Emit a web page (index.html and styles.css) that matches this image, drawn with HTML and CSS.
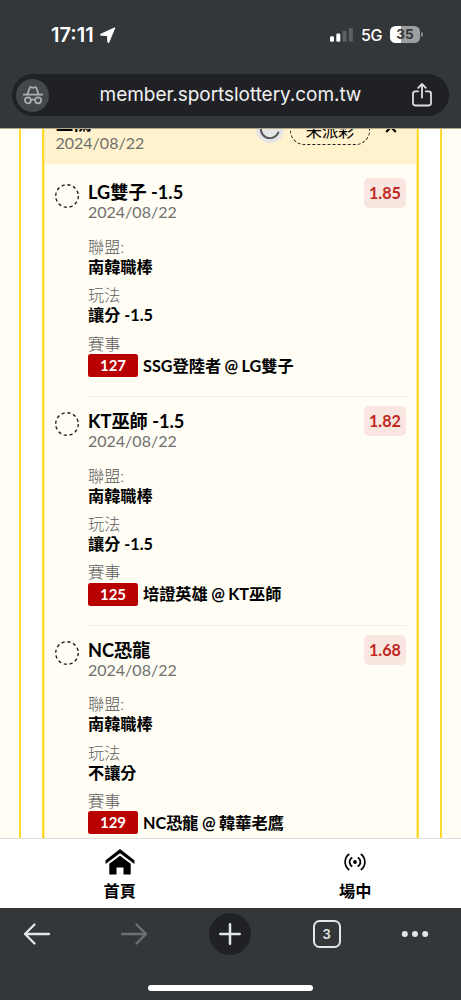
FILE: index.html
```html
<!DOCTYPE html>
<html lang="zh-Hant">
<head>
    <meta charset="UTF-8">
    <meta name="viewport" content="width=device-width, initial-scale=1.0">
    <title>member.sportslottery.com.tw</title>
    <link rel="stylesheet" href="styles.css">
</head>
<body>

<header class="browser-top">
    <div class="status-bar">
        <span class="time">17:11</span>
        <svg class="location" width="16" height="16" viewBox="0 0 16 16"><path d="M14.6 1 1 7.3q-.7.5.2.8l6.4.4.4 6.4q.3.8.8.2z" fill="#fff" stroke="#fff" stroke-width="1.2" stroke-linejoin="round"/></svg>
        <svg class="signal" width="23" height="14" viewBox="0 0 23 14">
            <rect x="0" y="8.3" width="4" height="5.5" rx="1.2" fill="#fff"/>
            <rect x="6.3" y="5.5" width="4" height="8.3" rx="1.2" fill="#fff"/>
            <rect x="12.6" y="2.8" width="4" height="11" rx="1.2" fill="#5d6062"/>
            <rect x="18.9" y="0" width="4" height="13.8" rx="1.2" fill="#5d6062"/>
        </svg>
        <span class="network">5G</span>
        <span class="battery">35</span>
        <span class="battery-tip"></span>
    </div>
    <div class="address-bar">
        <span class="incognito">
            <svg width="20" height="19" viewBox="0 0 20 19" fill="none" stroke="#a9adb1" stroke-width="1.8">
                <path d="M0 8.6h20"/>
                <path d="M4.6 8 6.6 2q.3-1 1.3-.8l2.1.6 2.1-.6q1-.2 1.3.8l2 6"/>
                <circle cx="4.9" cy="14.3" r="3"/>
                <circle cx="15.1" cy="14.3" r="3"/>
                <path d="M7.8 14q2.2-1.3 4.4 0"/>
            </svg>
        </span>
        <span class="url">member.sportslottery.com.tw</span>
        <svg class="share" width="20" height="24" viewBox="0 0 20 24" fill="none" stroke="#dcdee1" stroke-width="1.8" stroke-linecap="round" stroke-linejoin="round">
            <path d="M6.2 8.3H3.4Q1 8.3 1 10.7v9.4q0 2.4 2.4 2.4h13.2q2.4 0 2.4-2.4v-9.4q0-2.4-2.4-2.4h-2.8"/>
            <path d="M10 14.6V1.2M6.2 4.8 10 1l3.8 3.8"/>
        </svg>
    </div>
</header>

<main class="page">
    <div class="side side-left"></div>
    <div class="card">
        <div class="card-header">
            <div class="card-info">
                <div class="title">三關</div>
                <div class="date">2024/08/22</div>
            </div>
            <span class="refresh">
                <svg width="20" height="20" viewBox="0 0 20 20" fill="none" stroke="#555" stroke-width="2" stroke-linecap="round"><path d="M16 3.5A9 9 0 1 0 18.3 13.5"/></svg>
            </span>
            <span class="pill">未派彩</span>
            <svg class="chevron" width="12" height="8" viewBox="0 0 12 8" fill="none" stroke="#000" stroke-width="2.2"><path d="m1.2 7 4.8-5 4.8 5"/></svg>
        </div>

        <div class="bets">
            <div class="bet">
                <svg class="ring" width="26" height="26" viewBox="0 0 26 26"><circle cx="13" cy="13" r="11.3"/></svg>
                <div class="bet-body">
                    <div class="bet-top">
                        <div>
                            <div class="title">LG雙子 -1.5</div>
                            <div class="date">2024/08/22</div>
                        </div>
                        <span class="odds">1.85</span>
                    </div>
                    <div class="field"><div class="label">聯盟:</div><div class="value">南韓職棒</div></div>
                    <div class="field"><div class="label">玩法</div><div class="value">讓分 -1.5</div></div>
                    <div class="field"><div class="label">賽事</div><div class="event"><span class="code">127</span><span class="teams">SSG登陸者 @ LG雙子</span></div></div>
                </div>
            </div>

            <div class="bet">
                <svg class="ring" width="26" height="26" viewBox="0 0 26 26"><circle cx="13" cy="13" r="11.3"/></svg>
                <div class="bet-body">
                    <div class="bet-top">
                        <div>
                            <div class="title">KT巫師 -1.5</div>
                            <div class="date">2024/08/22</div>
                        </div>
                        <span class="odds">1.82</span>
                    </div>
                    <div class="field"><div class="label">聯盟:</div><div class="value">南韓職棒</div></div>
                    <div class="field"><div class="label">玩法</div><div class="value">讓分 -1.5</div></div>
                    <div class="field"><div class="label">賽事</div><div class="event"><span class="code">125</span><span class="teams">培證英雄 @ KT巫師</span></div></div>
                </div>
            </div>

            <div class="bet">
                <svg class="ring" width="26" height="26" viewBox="0 0 26 26"><circle cx="13" cy="13" r="11.3"/></svg>
                <div class="bet-body">
                    <div class="bet-top">
                        <div>
                            <div class="title">NC恐龍</div>
                            <div class="date">2024/08/22</div>
                        </div>
                        <span class="odds">1.68</span>
                    </div>
                    <div class="field"><div class="label">聯盟:</div><div class="value">南韓職棒</div></div>
                    <div class="field"><div class="label">玩法</div><div class="value">不讓分</div></div>
                    <div class="field"><div class="label">賽事</div><div class="event"><span class="code">129</span><span class="teams">NC恐龍 @ 韓華老鷹</span></div></div>
                </div>
            </div>
        </div>
    </div>
    <div class="side side-right"></div>
</main>

<nav class="site-nav">
    <div class="nav-item">
        <svg width="30" height="26" viewBox="0 0 30 26">
            <path d="M15 0 .6 11.2V15L15 4.2 29.4 15v-3.8z"/>
            <path d="M15 6.7 4.3 14.8V25.6h7.2v-7.2h7v7.2h7.2V14.8z"/>
        </svg>
        <span>首頁</span>
    </div>
    <div class="nav-item">
        <svg width="22" height="26" viewBox="0 0 22 26" fill="none" stroke="#000" stroke-width="1.7">
            <path d="M5.2 5Q1.1 8.3 1.1 13t4.1 8M16.8 5q4.1 3.3 4.1 8t-4.1 8M8.3 8.5Q5.6 10 5.6 13t2.7 4.5M13.7 8.5q2.7 1.5 2.7 4.5t-2.7 4.5"/>
            <circle cx="11" cy="13" r="1.9" fill="#000" stroke="none"/>
        </svg>
        <span>場中</span>
    </div>
</nav>

<footer class="browser-bottom">
    <div class="toolbar">
        <div class="tool"><svg width="28" height="24" viewBox="0 0 28 24" fill="none" stroke="#e3e6e9" stroke-width="2.3" stroke-linecap="round" stroke-linejoin="round"><path d="M26 12H2M11.5 2.5 2 12l9.5 9.5"/></svg></div>
        <div class="tool"><svg width="28" height="24" viewBox="0 0 28 24" fill="none" stroke="#6e7174" stroke-width="2.3" stroke-linecap="round" stroke-linejoin="round"><path d="M2 12h24M16.5 2.5 26 12l-9.5 9.5"/></svg></div>
        <div class="tool"><span class="new-tab"><svg width="24" height="24" viewBox="0 0 24 24" stroke="#e3e6e9" stroke-width="2.5" stroke-linecap="round"><path d="M12 2.3v19.4M2.3 12h19.4"/></svg></span></div>
        <div class="tool"><span class="tabs">3</span></div>
        <div class="tool"><svg width="28" height="8" viewBox="0 0 28 8" fill="#e3e6e9"><circle cx="3.8" cy="4" r="3"/><circle cx="14" cy="4" r="3"/><circle cx="24.2" cy="4" r="3"/></svg></div>
    </div>
    <div class="home-indicator"></div>
</footer>

</body>
</html>
```

FILE: styles.css
```css
* {
    box-sizing: border-box;
}
body {
    margin: 0;
    height: 1000px;
    display: flex;
    flex-direction: column;
    overflow: hidden;
    font-family: Lato, "Noto Sans CJK TC", sans-serif;
    font-size: 16.2px;
    background: #fff;
    color: #000;
}
svg {
    display: block;
    flex: none;
}

/* browser top */
.browser-top {
    flex: none;
    height: 128px;
    background: #343739;
    font-family: Inter, sans-serif;
    color: #fff;
}
.status-bar {
    display: flex;
    align-items: center;
    height: 74px;
    padding: 0 38px 5px 51px;
}
.time {
    width: 45px;
    font-size: 20px;
    font-weight: 600;
    white-space: nowrap;
}
.location {
    margin-left: 4px;
}
.signal {
    margin-left: auto;
}
.network {
    width: 22px;
    margin-left: 8px;
    font-size: 16px;
    font-weight: 500;
    letter-spacing: -0.3px;
    white-space: nowrap;
}
.battery {
    width: 30px;
    height: 17px;
    margin-left: 7px;
    border-radius: 5.5px;
    background: linear-gradient(to right, #fff 35%, #9c9e9f 35%);
    color: #343739;
    font-size: 13.5px;
    font-weight: 700;
    line-height: 17px;
    text-align: center;
}
.battery-tip {
    width: 2px;
    height: 5px;
    margin-left: 1px;
    border-radius: 0 2px 2px 0;
    background: #85888a;
}
.address-bar {
    display: flex;
    align-items: center;
    height: 42px;
    margin: 0 12px;
    padding: 0 17px 0 4px;
    border-radius: 21px;
    background: #202124;
}
.incognito {
    display: flex;
    align-items: center;
    justify-content: center;
    width: 33px;
    height: 33px;
    border-radius: 50%;
    background: #43484c;
}
.url {
    flex: 1;
    font-size: 19px;
    letter-spacing: -0.05px;
    line-height: 24px;
    text-align: center;
    color: #f1f1f2;
}

/* page */
.page {
    flex: none;
    display: flex;
    height: 710px;
    overflow: hidden;
    border-top: 1px solid #b3aa8b;
}
.side {
    background: #fffdf4;
}
.side-left {
    width: 21px;
    border-right: 2px solid #ffd92e;
}
.side-right {
    flex: 1;
    border-left: 2px solid #ffd92e;
}
.card {
    width: 377px;
    height: 830px;
    margin: -45px 21px 0;
    border: solid #ffd92e;
    border-width: 0 2px;
    background: #fffdf4;
    box-shadow: inset 1px 0 #ffec90, inset -1px 0 #ffec90;
}
.card-header {
    display: flex;
    align-items: flex-start;
    height: 80px;
    margin: 0 1px;
    padding: 0 19px 0 10.5px;
    background: #fff2cc;
}
.card-info {
    flex: 1;
    padding-top: 28px;
}
.title {
    font-size: 18.2px;
    font-weight: 700;
    line-height: 22px;
    white-space: nowrap;
}
.date {
    font-size: 16px;
    line-height: 17px;
    color: #707070;
}
.refresh {
    display: flex;
    align-items: center;
    justify-content: center;
    width: 28px;
    height: 28px;
    margin-top: 31px;
    border-radius: 50%;
    background: #e5e5e8;
}
.pill {
    width: 80px;
    height: 29px;
    margin: 32px 15px 0 6px;
    border: 1.5px dashed #222;
    border-radius: 15px;
    line-height: 27px;
    text-align: center;
}
.chevron {
    margin-top: 41px;
}

/* bets */
.bets {
    padding: 4.7px 11px 0;
}
.bet {
    display: flex;
    height: 228.7px;
}
.ring {
    margin: 14px 7px 0 -1px;
    fill: none;
    stroke: #222;
    stroke-width: 1.4;
    stroke-dasharray: 3.2 2.717;
}
.bet-body {
    flex: 1;
    margin-left: 1px;
    padding-top: 12.7px;
    border-bottom: 1.5px solid #eeede7;
}
.bet-top {
    display: flex;
    justify-content: space-between;
    height: 55.6px;
}
.odds {
    width: 42px;
    height: 30px;
    margin-top: -3.7px;
    border-radius: 5px;
    background: #f9e6e0;
    color: #c0281f;
    font-size: 16.2px;
    font-weight: 700;
    line-height: 30px;
    text-align: center;
}
.field {
    height: 48.3px;
    line-height: 20px;
}
.label {
    color: #606060;
    font-weight: 300;
}
.value,
.teams {
    font-weight: 700;
    white-space: nowrap;
}
.teams {
    word-spacing: -0.5px;
}
.event {
    display: flex;
    align-items: center;
    height: 24px;
}
.code {
    width: 50px;
    height: 23px;
    margin-right: 5px;
    border-radius: 2.5px;
    background: #b80000;
    color: #fff;
    font-size: 15px;
    font-weight: 700;
    line-height: 23px;
    text-align: center;
}

/* site nav */
.site-nav {
    flex: none;
    display: grid;
    grid-template-columns: 235.5px 235.5px;
    height: 70px;
    padding: 10px 0 0 2px;
    border-top: 1px solid #dedede;
    background: #fff;
}
.nav-item {
    display: flex;
    flex-direction: column;
    align-items: center;
    gap: 5px;
    font-weight: 700;
    line-height: 22px;
}

/* browser bottom */
.browser-bottom {
    flex: 1;
    background: #343739;
    font-family: Inter, sans-serif;
}
.toolbar {
    display: flex;
    height: 77px;
    margin-left: -11px;
    padding-top: 5px;
}
.tool {
    flex: none;
    display: flex;
    align-items: center;
    justify-content: center;
    width: 96.5px;
    height: 42px;
}
.tool:last-child {
    width: 80px;
}
.new-tab {
    display: flex;
    align-items: center;
    justify-content: center;
    width: 42px;
    height: 42px;
    border-radius: 50%;
    background: #202124;
}
.tabs {
    width: 28px;
    height: 28px;
    border: 2px solid #e3e6e9;
    border-radius: 6.5px;
    color: #e3e6e9;
    font-size: 13px;
    font-weight: 600;
    line-height: 25px;
    text-align: center;
}
.home-indicator {
    width: 165px;
    height: 6px;
    margin: 0 auto;
    border-radius: 3px;
    background: #fff;
}
```
